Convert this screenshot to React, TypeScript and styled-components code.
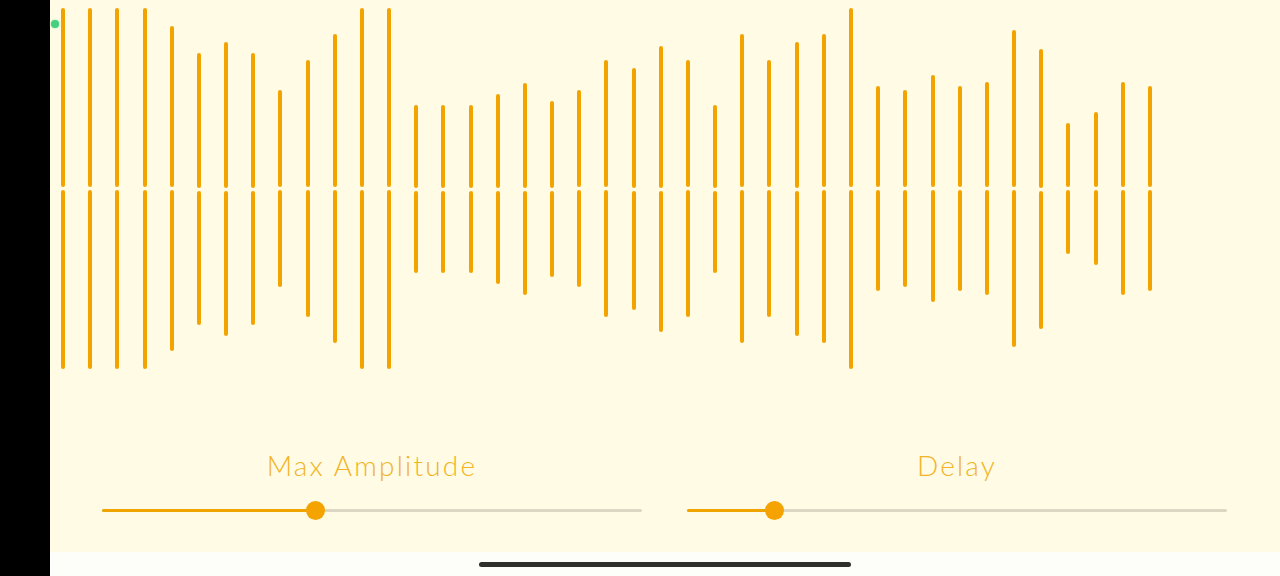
import React from "react";
import styled, { createGlobalStyle } from "styled-components";

const Global = createGlobalStyle`
  html, body { margin: 0; padding: 0; background: #000; }
  body { font-family: "Lato", "Open Sans", sans-serif; }
`;

const Screen = styled.div`
  display: flex;
  width: 1280px;
  height: 576px;
  overflow: hidden;
`;

const SideBar = styled.div`
  width: 50px;
  flex: none;
  background: #000;
`;

const Main = styled.div`
  position: relative;
  flex: 1;
  display: flex;
  flex-direction: column;
  background: #fffbe4;
`;

const Wave = styled.div`
  height: 377px;
  display: flex;
  align-items: center;
  gap: 23.18px;
  padding-left: 11px;
`;

const BarColumn = styled.div`
  width: 4px;
  display: flex;
  flex-direction: column;
  gap: 3px;
`;

const Half = styled.div`
  width: 4px;
  background: #f2a300;
  border-radius: 2px;
`;

const Controls = styled.div`
  flex: 1;
  display: grid;
  grid-template-columns: 1fr 1fr;
  padding: 0 30px;
`;

const Control = styled.div`
  display: flex;
  flex-direction: column;
  align-items: center;
  padding: 0 23px 0 22px;
`;

const Label = styled.div`
  margin-top: 72px;
  font-family: "Lato", sans-serif;
  font-weight: 300;
  font-size: 28px;
  letter-spacing: 2.2px;
  color: #f2b425;
  line-height: 32px;
`;

const Track = styled.div`
  position: relative;
  margin-top: 28px;
  width: 100%;
  height: 3px;
  background: #dcd7c2;
  border-radius: 2px;
`;

const Fill = styled.div`
  height: 3px;
  background: #efa400;
  border-radius: 2px;
`;

const Thumb = styled.div`
  position: absolute;
  top: -8px;
  width: 19px;
  height: 19px;
  margin-left: -9.5px;
  border-radius: 50%;
  background: #f5a300;
`;

const Footer = styled.div`
  height: 24px;
  flex: none;
  background: #fdfdf9;
  display: flex;
  justify-content: center;
  align-items: center;
`;

const HomeBar = styled.div`
  width: 372px;
  height: 5px;
  border-radius: 3px;
  background: #2f2f2a;
  margin-top: 1px;
`;

const TouchDot = styled.div`
  position: absolute;
  left: 1px;
  top: 20px;
  width: 8px;
  height: 8px;
  border-radius: 50%;
  background: #45d07f;
  box-shadow: 0 0 2px #7fe3a8;
`;

const halves: [number, number][] = [
  [8, 369], [8, 369], [8, 369], [8, 369], [26, 351], [52, 324], [41, 335], [52, 324],
  [90, 287], [60, 317], [34, 343], [8, 369], [8, 369], [104, 272], [104, 272], [104, 272],
  [93, 283], [82, 294], [100, 276], [90, 287], [60, 317], [67, 309], [45, 331], [60, 317],
  [104, 272], [34, 343], [60, 317], [41, 335], [34, 343], [8, 369], [86, 291], [90, 287],
  [75, 302], [86, 291], [82, 295], [30, 347], [48, 328], [123, 254], [112, 265], [82, 295],
  [86, 291],
];

const Slider = ({ label, value }: { label: string; value: number }) => (
  <Control>
    <Label>{label}</Label>
    <Track>
      <Fill style={{ width: `${value * 100}%` }} />
      <Thumb style={{ left: `${value * 100}%` }} />
    </Track>
  </Control>
);

export default function App() {
  return (
    <Screen>
      <Global />
      <SideBar />
      <Main>
        <TouchDot />
        <Wave>
          {halves.map(([t, b], i) => (
            <BarColumn key={i}>
              <Half style={{ height: 187 - t }} />
              <Half style={{ height: b - 190 }} />
            </BarColumn>
          ))}
        </Wave>
        <Controls>
          <Slider label="Max Amplitude" value={0.395} />
          <Slider label="Delay" value={0.162} />
        </Controls>
        <Footer>
          <HomeBar />
        </Footer>
      </Main>
    </Screen>
  );
}
